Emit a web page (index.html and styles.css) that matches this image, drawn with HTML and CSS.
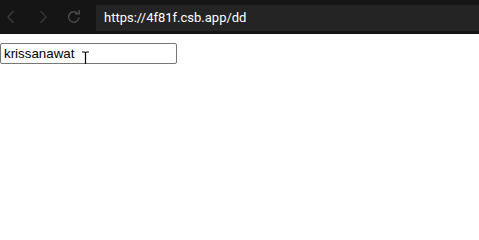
FILE: index.html
```html
<!DOCTYPE html>
<html>
<head>
<meta charset="utf-8">
<link rel="stylesheet" href="styles.css">
</head>
<body>
<header class="toolbar">
  <div class="nav">
    <svg class="icon back" width="10" height="14" viewBox="0 0 10 14"><path d="M7.5 1 L2 7 L7.5 13" fill="none" stroke="#3b3b42" stroke-width="1.4"/></svg>
    <svg class="icon fwd" width="10" height="14" viewBox="0 0 10 14"><path d="M2.5 1 L8 7 L2.5 13" fill="none" stroke="#3b3636" stroke-width="1.4"/></svg>
    <svg class="icon reload" width="16" height="16" viewBox="0 0 16 16"><path d="M13 8.5 A5.2 5.2 0 1 1 11.5 4.3" fill="none" stroke="#4a4a4e" stroke-width="1.5"/><path d="M9 4.8 L13.2 4.8 L13.2 1" fill="none" stroke="#4a4a4e" stroke-width="1.5"/></svg>
  </div>
  <div class="url">https://4f81f.csb.app/dd</div>
</header>
<main class="page">
  <div class="field">
    <input class="text-input" type="text" value="krissanawat">
    <svg class="ibeam" width="9" height="17" viewBox="0 0 9 17"><path d="M1 1 H3.5 Q4.5 1 4.5 2 V15 Q4.5 16 3.5 16 H1 M8 1 H5.5 Q4.5 1 4.5 2 M4.5 15 Q4.5 16 5.5 16 H8" fill="none" stroke="#000" stroke-width="1.2"/></svg>
  </div>
</main>
</body>
</html>
```
FILE: styles.css
```css
html, body {
  margin: 0;
  padding: 0;
  background: #fff;
}
.toolbar {
  height: 34px;
  background: #151515;
  display: flex;
  align-items: center;
}
.nav {
  width: 96px;
  display: flex;
  align-items: center;
  height: 34px;
}
.icon { display: block; }
.back { margin-left: 6px; }
.fwd { margin-left: 22px; }
.reload { margin-left: 18px; }
.url {
  flex: 1;
  height: 26px;
  background: #242424;
  color: #fff;
  font-family: Roboto, "Liberation Sans", sans-serif;
  font-size: 13px;
  line-height: 26px;
  padding-left: 8px;
  box-sizing: border-box;
  align-self: flex-start;
  margin-top: 5px;
}
.page {
  padding-top: 9px;
}
.field {
  position: relative;
  width: 177px;
}
.text-input {
  display: block;
  box-sizing: border-box;
  width: 177px;
  height: 21px;
  margin: 0;
  padding: 1px 3px;
  border: 1px solid #767676;
  border-radius: 2px;
  font-family: "Liberation Sans", Arial, sans-serif;
  font-size: 13.33px;
  color: #000;
  background: #fff;
  outline: none;
}
.ibeam {
  position: absolute;
  left: 81px;
  top: 8px;
}
```
